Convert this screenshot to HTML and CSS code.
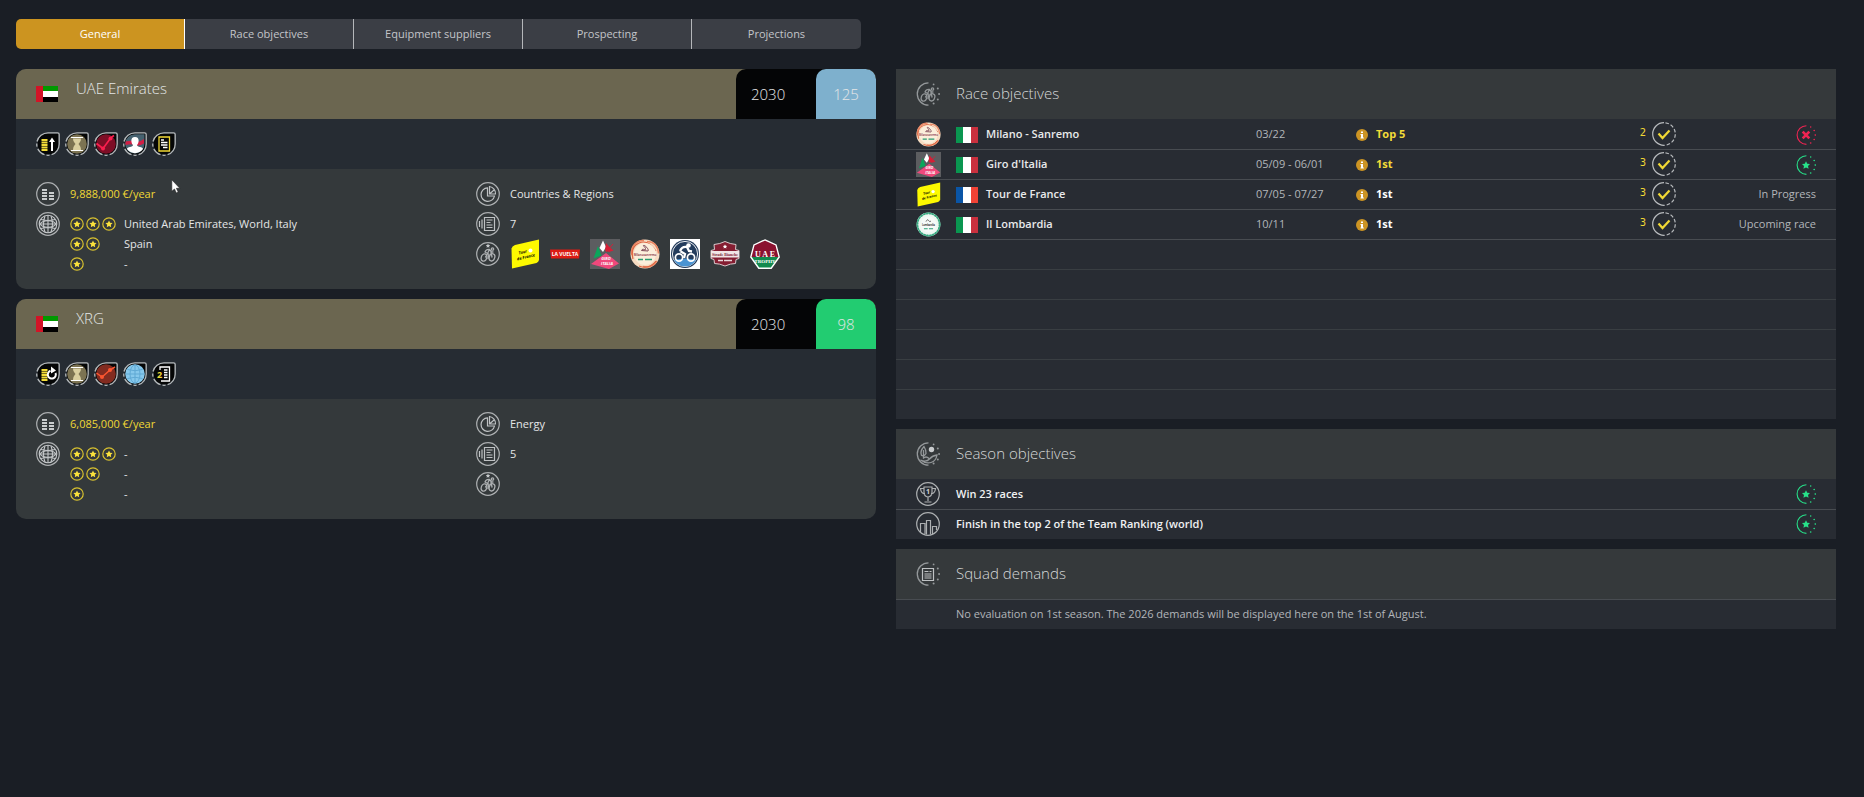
FILE: index.html
```
<!DOCTYPE html>
<html lang="en">
<head>
  <meta charset="UTF-8">
  <meta name="viewport" content="width=device-width, initial-scale=1.0">
  <title>Sponsors</title>
  <link rel="stylesheet" href="styles.css">
</head>
<body>

  <!-- shared icons -->
  <svg class="sprite" aria-hidden="true">
    <symbol id="flag-uae" viewBox="0 0 22 16">
      <path fill="#fff" d="M0 0h22v16H0z"/>
      <path fill="#090" d="M0 0h22v5H0z"/>
      <path fill="#000" d="M0 11h22v5H0z"/>
      <path fill="#d21427" d="M0 0h7v16H0z"/>
    </symbol>
    <symbol id="flag-it" viewBox="0 0 22 16">
      <path fill="#fff" d="M0 0h22v16H0z"/>
      <path fill="#0a9650" d="M0 0h7v16H0z"/>
      <path fill="#c9303e" d="M15 0h7v16h-7z"/>
    </symbol>
    <symbol id="flag-fr" viewBox="0 0 22 16">
      <path fill="#fff" d="M0 0h22v16H0z"/>
      <path fill="#0a55a6" d="M0 0h7v16H0z"/>
      <path fill="#f14336" d="M15 0h7v16h-7z"/>
    </symbol>

    <symbol id="star" viewBox="0 0 14 14">
      <circle cx="7" cy="7" r="6.2" fill="none" stroke="#d8c12f" stroke-width="1.2"/>
      <path fill="#fbe23c" d="M7 3.400l1.100 2.300 2.500.3-1.800 1.800.4 2.500-2.200-1.200-2.200 1.200.4-2.500-1.800-1.800 2.500-.3z"/>
    </symbol>

    <!-- rings -->
    <symbol id="ring" viewBox="0 0 24 24">
      <circle cx="12" cy="12" r="11.3" fill="none" stroke="#adb0b2" stroke-width="1.2"/>
    </symbol>
    <symbol id="ring-dots" viewBox="0 0 24 24">
      <path fill="none" stroke="currentColor" stroke-width="1.3" d="M12.5.8A11.2 11.2 0 0 0 12.5 23.2"/>
      <g fill="currentColor"><circle cx="17.6" cy="2.4" r=".9"/><circle cx="21.8" cy="6.6" r="1"/><circle cx="23.1" cy="12" r="1"/><circle cx="21.8" cy="17.4" r="1"/><circle cx="17.6" cy="21.6" r="1"/></g>
    </symbol>
    <symbol id="trait-frame" viewBox="0 0 24 24">
      <path fill="#050606" d="M12 1.5h9.5q1 0 1 1V12A10.5 10.5 0 1 1 12 1.5z"/>
      <g fill="none" stroke="#b4b8ba" stroke-width="1.3">
        <path d="M1 9.5A11.3 11.3 0 0 1 12 .8h9.6q1.6 0 1.6 1.6V12A11.3 11.3 0 0 1 15.6 22.7"/>
        <path d="M13.6 23.2A11.3 11.3 0 0 1 10.5 23.2M8.5 22.7A11.3 11.3 0 0 1 1.8 16.9M1 14.7A11.3 11.3 0 0 1 .8 11.5"/>
      </g>
    </symbol>

    <!-- trait icons -->
    <symbol id="coins" viewBox="0 0 24 24">
      <path stroke="#f3dc38" stroke-width="2.1" d="M5.500 8h6M5.500 10.500h6M5.500 13h6M5.500 15.500h6M5.500 18h6"/>
    </symbol>
    <symbol id="hourglass" viewBox="0 0 24 24">
      <circle cx="12" cy="12" r="9.8" fill="#7c7352"/>
      <path fill="#d9cfa0" d="M8 6.500h8c0 3-1.500 4-2.500 5.500 1 1.500 2.500 2.500 2.500 6H8c0-3.500 1.500-4.500 2.500-6C9.500 10.500 8 9.500 8 6.500z"/>
      <path stroke="#fff" stroke-width="1.2" d="M6 5.500h12M6 18.500h12"/>
    </symbol>

    <!-- info icons -->
    <symbol id="ico-budget" viewBox="0 0 24 24">
      <use href="#ring"/>
      <path stroke="#c9cccd" stroke-width="2" d="M6 8h5M6 11h5M6 14h5M6 17h5M13 11h5M13 14h5M13 17h5"/>
    </symbol>
    <symbol id="ico-globe" viewBox="0 0 24 24">
      <use href="#ring"/>
      <g fill="none" stroke="#c4c7c9" stroke-width="1.1">
        <circle cx="12" cy="12" r="8.8"/>
        <ellipse cx="12" cy="12" rx="7.500" ry="3.200"/>
        <path d="M12 3v18M3 12h18M5 7.500q7 2 14 0M5 16.500q7-2 14 0M9 4q-3 8 0 16M15 4q3 8 0 16"/>
      </g>
    </symbol>
    <symbol id="ico-sector" viewBox="0 0 24 24">
      <use href="#ring"/>
      <g fill="none" stroke="#bec1c3" stroke-width="1.2">
        <path d="M11.500 5.800a6.800 6.800 0 1 0 7 8.200h-7z"/>
        <path d="M13.500 4.500v7.500h6a7 7 0 0 0-6-7.500zM13.500 12l4.500-4"/>
      </g>
    </symbol>
    <symbol id="ico-contract" viewBox="0 0 24 24">
      <use href="#ring"/>
      <path fill="none" stroke="#bec1c3" stroke-width="1.2" d="M8.500 5.500h10v13h-10zM10.500 8h6M10.500 10.500h4M10.500 13h6M10.500 15.500h6M6 7.500v9M3.500 9v6"/>
    </symbol>
    <symbol id="cyclist" viewBox="0 0 24 24">
      <g fill="none" stroke="currentColor" stroke-width="1.3" stroke-linecap="round" stroke-linejoin="round">
        <ellipse cx="8" cy="15.500" rx="2.700" ry="3.700" transform="rotate(18 8 15.500)"/>
        <ellipse cx="16" cy="15.300" rx="2.700" ry="3.700" transform="rotate(18 16 15.300)"/>
        <path d="M9 10q1-2.800 4.500-2.500l2 2.500h1.500M9 10l4 2.200-1 4.500M13.500 7.500l-1.500 3M16 15l-1-4.500M9.500 15l2-3"/>
        <circle cx="16.500" cy="7" r="1.200"/>
      </g>
    </symbol>
    <symbol id="ico-races" viewBox="0 0 24 24">
      <use href="#ring"/>
      <use href="#cyclist"/>
      <path fill="#c8cbcd" d="M12 1.500l.7 1.400 1.500.2-1.100 1.100.3 1.600-1.400-.8-1.400.8.3-1.600-1.100-1.100 1.500-.2z"/>
    </symbol>
    <symbol id="ico-check" viewBox="0 0 24 24">
      <path fill="none" stroke="#b8bbbe" stroke-width="1.2" d="M12 .7A11.3 11.3 0 0 0 12 23.3"/>
      <path fill="none" stroke="#b8bbbe" stroke-width="1.2" stroke-dasharray="3.500 2" stroke-dashoffset="-1.500" d="M12 .7A11.3 11.3 0 0 1 12 23.3"/>
      <path fill="none" stroke="#f0d835" stroke-width="2.2" d="M6.500 11.500l4 4.500 7-7.500"/>
    </symbol>
    <symbol id="ico-info" viewBox="0 0 12 12">
      <circle cx="6" cy="6" r="6" fill="#cc9423"/>
      <path fill="#fff" d="M5 2.500h2v1.500H5zM4.500 5H7v3.500h.8v1H4.500v-1H5V6h-.5z"/>
    </symbol>
    <symbol id="ico-star-ok" viewBox="0 0 24 24">
      <use href="#ring-dots"/>
      <path fill="currentColor" d="M12 7.500l1.500 3 3.300.4-2.400 2.300.7 3.400-3.100-1.700-3.100 1.700.7-3.400-2.400-2.300 3.300-.4z"/>
    </symbol>

    <!-- race logos -->
    <symbol id="logo-tour" viewBox="0 0 30 30">
      <path fill="#fdf900" d="M1.500 9.500Q2 7 5 6L29 .5V21q-.5 2-2.500 3L2 29.500z"/>
      <g class="script" transform="rotate(-14 15 15)"><text x="9" y="14">Tour</text><text x="6" y="19.500">de France</text></g>
      <circle cx="20.500" cy="11.500" r="2" fill="#fff"/>
    </symbol>
    <symbol id="logo-vuelta" viewBox="0 0 30 30">
      <path fill="#dc1c14" d="M0 10.500h30l-1 9H1z"/>
      <text class="block" x="15" y="17" text-anchor="middle">LA VUELTA</text>
    </symbol>
    <symbol id="logo-giro" viewBox="0 0 30 30">
      <path fill="#5c5d60" d="M0 0h30v30H0z"/>
      <path fill="#f0487c" d="M1 25l15-11 13 10.500L19 30z"/>
      <path fill="#0aa65b" d="M8 7L3.500 19.500l8-3z"/>
      <path fill="#fff" d="M13 1.500L9.500 9l3.500 4 3-5z"/>
      <path fill="#d51f36" d="M16 4l4 4.500 3.500 3L19 13l-4-1.500z"/>
      <path stroke="#d51f36" d="M16 13l7-8"/>
      <text class="tiny" x="16" y="20.500" text-anchor="middle">GIRO</text>
      <text class="tiny" x="17" y="26" text-anchor="middle">ITALIA</text>
    </symbol>
    <symbol id="logo-milano" viewBox="0 0 30 30">
      <circle cx="15" cy="15" r="14.5" fill="#f6dcc2"/>
      <path fill="none" stroke="#e98663" stroke-width="1.5" d="M2 16C0 7 7 1 14 1.500M17 2.500c8 0 11 6 11.500 12M27 22c-3 5-9 7-14 5.500"/>
      <path fill="none" stroke="#df6744" stroke-width="1.2" d="M3 20Q0 8 9 4t17 8M9 27q10 4 17-5"/>
      <circle cx="15" cy="15" r="11" fill="#fbeedb"/>
      <path fill="none" stroke="#7c4455" d="M11.500 11.500c1-3 5 1 4-2s-3-2-2-3 6 4 4.500 5.500z"/>
      <text class="micro plum" x="15" y="17" text-anchor="middle">Milanosanremo</text>
      <path stroke="#299b70" stroke-width="1.3" d="M8 20.500h5M15 20.500h7"/>
    </symbol>
    <symbol id="logo-rider" viewBox="0 0 30 30">
      <path fill="#fff" d="M0 0h30v30H0z"/>
      <circle cx="15" cy="15" r="14" fill="#243c5c"/>
      <circle cx="15" cy="15" r="12.6" fill="none" stroke="#fff" stroke-width=".9"/>
      <path fill="#4a94d3" d="M4 21q11-3 22 0-4 6.500-11 6.500T4 21z"/>
      <g fill="none" stroke="#fff" stroke-width="1.7">
        <circle cx="9" cy="18.500" r="3.600"/>
        <circle cx="21" cy="18.500" r="3.600"/>
        <path stroke-width="2.3" d="M10 12q2-5 7-4l2 4 3 .5M10 12l5 3-1 4"/>
      </g>
      <circle cx="18.500" cy="6.500" r="2.300" fill="#fff"/>
    </symbol>
    <symbol id="logo-strade" viewBox="0 0 30 30">
      <path fill="#851e32" stroke="#d9c9cc" d="M15 2.500q5 2.500 11 3l-.5 5 3.500 1v8l-3 1-.5 4q-5 0-10.500 2.500Q9.500 24.500 4.500 24.500L4 20.500l-3-1v-8l3.500-1-.5-5q6-.5 11-3z"/>
      <path fill="#f1e6e6" d="M1 12h28v6.500H1z"/>
      <text class="name plum" x="15" y="17" text-anchor="middle">Strade Bianche</text>
      <path fill="#fff" d="M15 5.500l.7 1.300 1.500.2-1.100 1 .3 1.500-1.400-.7-1.400.7.3-1.500-1.100-1 1.500-.2z"/>
      <path stroke="#e8d8da" stroke-width="1.3" d="M8 21.500h5M14 21.500h8"/>
    </symbol>
    <symbol id="logo-uae" viewBox="0 0 30 30">
      <path fill="#8b1230" d="M15 1l11 5 3 12H1L4 6z"/>
      <path fill="#138a4e" d="M1 18h28l-8 11H9z"/>
      <path fill="none" stroke="#fff" stroke-width="1.4" d="M15 .9l11 5L29.200 18l-8 11.200H8.800L.8 18 4 5.900z"/>
      <text class="arch" x="15" y="17.500" text-anchor="middle">U A E</text>
      <text class="trophy" x="15" y="23.500" text-anchor="middle">TROPHY</text>
    </symbol>
    <symbol id="logo-lombardia" viewBox="0 0 30 30">
      <circle cx="15" cy="15" r="14.3" fill="#eef7f2"/>
      <circle cx="15" cy="15" r="13.3" fill="none" stroke="#2ba178" stroke-width="2" stroke-dasharray="2 1.500"/>
      <g fill="none" stroke="#3aa982" stroke-width="1">
        <path d="M15 1l10 4 4 10-4 10-10 4-10-4-4-10L5 5z"/>
        <path d="M9.600 2L20.400 2 28 9.600v10.800L20.400 28H9.600L2 20.400V9.600z"/>
      </g>
      <circle cx="15" cy="15" r="9.5" fill="#f6faf8"/>
      <path fill="none" stroke="#555" d="M12 11.500q2-4 3-1.500t3 1"/>
      <text class="micro" x="15" y="17" text-anchor="middle">Lombardia</text>
      <path stroke="#2ba178" stroke-width="1.3" d="M9.500 20h4.500M15.500 20h5"/>
    </symbol>
  </svg>

  <main class="page">

    <nav class="tabs">
      <button class="tab active" type="button">General</button>
      <button class="tab" type="button">Race objectives</button>
      <button class="tab" type="button">Equipment suppliers</button>
      <button class="tab" type="button">Prospecting</button>
      <button class="tab" type="button">Projections</button>
    </nav>

    <div class="sponsors">

      <!-- UAE Emirates -->
      <section class="sponsor">
        <header class="sponsor-head">
          <svg class="flag"><use href="#flag-uae"/></svg>
          <h2>UAE Emirates</h2>
          <div class="deal">
            <span class="year">2030</span>
            <span class="score blue">125</span>
          </div>
        </header>
        <div class="traits">
          <svg class="icon" viewBox="0 0 24 24"><use href="#trait-frame"/><use href="#coins"/><path fill="#fff" d="M16 5.500l3 4.500h-2v9h-2v-9h-2z"/></svg>
          <svg class="icon" viewBox="0 0 24 24"><use href="#trait-frame"/><use href="#hourglass"/></svg>
          <svg class="icon" viewBox="0 0 24 24"><use href="#trait-frame"/><circle cx="12" cy="12" r="9.8" fill="#7d0e26"/><path fill="none" stroke="#f91f4e" stroke-width="1.7" d="M2.500 11.500l6.500 5 8-11 3-2"/><g fill="#f91f4e"><circle cx="9" cy="16.500" r="2"/><circle cx="16.500" cy="6.500" r="2"/></g></svg>
          <svg class="icon" viewBox="0 0 24 24"><use href="#trait-frame"/><path fill="#466270" d="M12 2.200h9.500V12A9.700 9.700 0 1 1 12 2.200z"/><path fill="#d21f45" d="M2.500 9.500q7-1.500 10 0t8.500-2.500v4.500q-5 3-9 1.500t-9.500 0z"/><path fill="#fff" d="M12 5c5 0 4 6 2 8 0 2.500 6 1.500 6 4a9.800 9.800 0 0 1-16 0c0-2.500 6-1.500 6-4-2-2-3-8 2-8z"/></svg>
          <svg class="icon" viewBox="0 0 24 24"><use href="#trait-frame"/><path fill="none" stroke="#f0d835" stroke-width="1.3" d="M7 5h10.500v14H7z"/><path stroke="#fff" stroke-width="1.3" d="M9 8h3M9 10.500h6.500M9 13h6.500M11 15.500h4.500"/></svg>
        </div>
        <div class="sponsor-body">
          <div class="col">
            <div class="line money"><svg class="icon"><use href="#ico-budget"/></svg>9,888,000 €/year</div>
            <div class="line tall">
              <svg class="icon"><use href="#ico-globe"/></svg>
              <dl class="stars">
                <dt><svg><use href="#star"/></svg><svg><use href="#star"/></svg><svg><use href="#star"/></svg></dt><dd>United Arab Emirates, World, Italy</dd>
                <dt><svg><use href="#star"/></svg><svg><use href="#star"/></svg></dt><dd>Spain</dd>
                <dt><svg><use href="#star"/></svg></dt><dd>-</dd>
              </dl>
            </div>
          </div>
          <div class="col">
            <div class="line"><svg class="icon"><use href="#ico-sector"/></svg>Countries &amp; Regions</div>
            <div class="line"><svg class="icon"><use href="#ico-contract"/></svg>7</div>
            <div class="line">
              <svg class="icon grey"><use href="#ico-races"/></svg>
              <div class="logos">
                <svg><use href="#logo-tour"/></svg>
                <svg><use href="#logo-vuelta"/></svg>
                <svg><use href="#logo-giro"/></svg>
                <svg><use href="#logo-milano"/></svg>
                <svg><use href="#logo-rider"/></svg>
                <svg><use href="#logo-strade"/></svg>
                <svg><use href="#logo-uae"/></svg>
              </div>
            </div>
          </div>
        </div>
      </section>

      <!-- XRG -->
      <section class="sponsor">
        <header class="sponsor-head">
          <svg class="flag"><use href="#flag-uae"/></svg>
          <h2>XRG</h2>
          <div class="deal">
            <span class="year">2030</span>
            <span class="score green">98</span>
          </div>
        </header>
        <div class="traits">
          <svg class="icon" viewBox="0 0 24 24"><use href="#trait-frame"/><use href="#coins"/><path fill="none" stroke="#fff" stroke-width="2" d="M19.500 11a4 4 0 1 1-5-2.200"/><path fill="#fff" d="M15 4.500l5 4-5 3z"/></svg>
          <svg class="icon" viewBox="0 0 24 24"><use href="#trait-frame"/><use href="#hourglass"/></svg>
          <svg class="icon" viewBox="0 0 24 24"><use href="#trait-frame"/><circle cx="12" cy="12" r="9.8" fill="#822b20"/><path fill="none" stroke="#fb5530" stroke-width="1.5" d="M2.500 11l5.500 4 8-7 5-3"/><g fill="#fb5530"><circle cx="8" cy="15" r="2"/><circle cx="16" cy="8" r="2"/></g></svg>
          <svg class="icon" viewBox="0 0 24 24"><use href="#trait-frame"/><circle cx="12" cy="12" r="9.8" fill="#86c8ec"/><g fill="none" stroke="#5ba6d2" stroke-width=".9"><ellipse cx="12" cy="12" rx="5" ry="9"/><path d="M12 3v18M3 12h18M4.500 7.500q7.500 2.500 15 0M4.500 16.500q7.500-2.500 15 0"/></g></svg>
          <svg class="icon" viewBox="0 0 24 24"><use href="#trait-frame"/><path fill="none" stroke="#fff" stroke-width="1.3" d="M8 8V5h9.500v14H9M12 8h3.500M12 10.500h3.500M12 13h3.500M12 15.500h3.500"/><text class="two" x="5" y="16">2</text></svg>
        </div>
        <div class="sponsor-body">
          <div class="col">
            <div class="line money"><svg class="icon"><use href="#ico-budget"/></svg>6,085,000 €/year</div>
            <div class="line tall">
              <svg class="icon"><use href="#ico-globe"/></svg>
              <dl class="stars">
                <dt><svg><use href="#star"/></svg><svg><use href="#star"/></svg><svg><use href="#star"/></svg></dt><dd>-</dd>
                <dt><svg><use href="#star"/></svg><svg><use href="#star"/></svg></dt><dd>-</dd>
                <dt><svg><use href="#star"/></svg></dt><dd>-</dd>
              </dl>
            </div>
          </div>
          <div class="col">
            <div class="line"><svg class="icon"><use href="#ico-sector"/></svg>Energy</div>
            <div class="line"><svg class="icon"><use href="#ico-contract"/></svg>5</div>
            <div class="line"><svg class="icon grey"><use href="#ico-races"/></svg></div>
          </div>
        </div>
      </section>
    </div>

    <div class="objectives">

      <section class="panel">
        <header class="panel-head">
          <svg class="icon dim" viewBox="0 0 24 24"><use href="#ring-dots"/><use href="#cyclist"/></svg>
          <h2>Race objectives</h2>
        </header>
        <table class="races">
          <colgroup>
            <col class="c-logo"><col><col class="c-date"><col class="c-goal"><col class="c-points"><col class="c-status">
          </colgroup>
          <tbody>
            <tr>
              <td class="logo"><svg><use href="#logo-milano"/></svg></td>
              <td class="race"><svg class="flag"><use href="#flag-it"/></svg>Milano - Sanremo</td>
              <td>03/22</td>
              <td class="goal reached"><svg><use href="#ico-info"/></svg>Top 5</td>
              <td class="points"><span>2</span><svg class="icon"><use href="#ico-check"/></svg></td>
              <td class="status"><svg class="result fail" viewBox="0 0 24 24"><use href="#ring-dots"/><path fill="none" stroke="currentColor" stroke-width="3.2" d="M8 8l8 8M16 8l-8 8"/></svg></td>
            </tr>
            <tr>
              <td class="logo"><svg><use href="#logo-giro"/></svg></td>
              <td class="race"><svg class="flag"><use href="#flag-it"/></svg>Giro d'Italia</td>
              <td>05/09 - 06/01</td>
              <td class="goal reached"><svg><use href="#ico-info"/></svg>1st</td>
              <td class="points"><span>3</span><svg class="icon"><use href="#ico-check"/></svg></td>
              <td class="status"><svg class="result ok"><use href="#ico-star-ok"/></svg></td>
            </tr>
            <tr>
              <td class="logo"><svg><use href="#logo-tour"/></svg></td>
              <td class="race"><svg class="flag"><use href="#flag-fr"/></svg>Tour de France</td>
              <td>07/05 - 07/27</td>
              <td class="goal"><svg><use href="#ico-info"/></svg>1st</td>
              <td class="points"><span>3</span><svg class="icon"><use href="#ico-check"/></svg></td>
              <td class="status">In Progress</td>
            </tr>
            <tr>
              <td class="logo"><svg><use href="#logo-lombardia"/></svg></td>
              <td class="race"><svg class="flag"><use href="#flag-it"/></svg>Il Lombardia</td>
              <td>10/11</td>
              <td class="goal"><svg><use href="#ico-info"/></svg>1st</td>
              <td class="points"><span>3</span><svg class="icon"><use href="#ico-check"/></svg></td>
              <td class="status">Upcoming race</td>
            </tr>
            <tr class="empty"><td colspan="6"></td></tr>
            <tr class="empty"><td colspan="6"></td></tr>
            <tr class="empty"><td colspan="6"></td></tr>
            <tr class="empty"><td colspan="6"></td></tr>
            <tr class="empty"><td colspan="6"></td></tr>
            <tr class="empty"><td colspan="6"></td></tr>
          </tbody>
        </table>
      </section>

      <section class="panel">
        <header class="panel-head">
          <svg class="icon dim" viewBox="0 0 24 24"><use href="#ring-dots"/><circle cx="15.500" cy="7.500" r="2.700" fill="#c8cbcd"/><path fill="none" stroke="currentColor" stroke-width="1.3" d="M8 4.500q-4.500 5-2.500 9 3 1 4.500-2 0-4-2-7zM7.500 8v8M4.500 18q6 2.500 9-1t7.500-4q-1 6-6 7.500t-10.500-2.500M7 16.500q3-3 6 0"/></svg>
          <h2>Season objectives</h2>
        </header>
        <ul class="season">
          <li>
            <svg class="icon grey" viewBox="0 0 24 24"><use href="#ring"/><path fill="none" stroke="currentColor" stroke-width="1.2" d="M8 5h8v5q0 4.500-4 5-4-.5-4-5zM8 6.500H4.500q.5 5 4.500 5.500M16 6.500h3.500q-.5 5-4.500 5.500M12 15v4M8.500 20h7"/><text class="one" x="12" y="12" text-anchor="middle">1</text></svg>
            <span>Win 23 races</span>
            <svg class="result ok"><use href="#ico-star-ok"/></svg>
          </li>
          <li>
            <svg class="icon grey" viewBox="0 0 24 24"><use href="#ring"/><path fill="none" stroke="currentColor" stroke-width="1.2" d="M4.500 20V11.500H9V22M10.500 22.500V8.500h4V22.500M16.500 22v-7.500h4V18"/></svg>
            <span>Finish in the top 2 of the Team Ranking (world)</span>
            <svg class="result ok"><use href="#ico-star-ok"/></svg>
          </li>
        </ul>
      </section>

      <section class="panel">
        <header class="panel-head">
          <svg class="icon dim" viewBox="0 0 24 24"><use href="#ring-dots"/><path fill="none" stroke="#bfc2c4" stroke-width="1.2" d="M6.500 6.500h11v12h-11zM8.500 9.500h4M8.500 12h7M8.500 14h7M8.500 16h7M13.500 9.500h2"/></svg>
          <h2>Squad demands</h2>
        </header>
        <p class="note">No evaluation on 1st season. The 2026 demands will be displayed here on the 1st of August.</p>
      </section>
    </div>
  </main>

  <svg class="cursor" viewBox="0 0 10 16" aria-hidden="true"><path fill="#fff" stroke="#222" stroke-width=".6" d="M.8.8v11.500l2.700-2.300 1.800 4 1.900-.9-1.800-3.800h3.400z"/></svg>

</body>
</html>
```
FILE: styles.css
```
* {
  box-sizing: border-box;
}
body {
  margin: 0;
  min-height: 100vh;
  background-color: #1a1e25;
  color: #e4e6e7;
  font-family: "Open Sans", "Noto Sans", sans-serif;
  font-size: 11px;
  line-height: 20px;
}
h2, dl, dd, ul, p {
  margin: 0;
  padding: 0;
}
h2 {
  font-size: 15px;
  font-weight: 300;
}
svg {
  display: block;
  flex-shrink: 0;
}
.sprite {
  display: none;
}
.page {
  display: grid;
  grid-template-columns: 43fr 47fr;
  column-gap: 20px;
  row-gap: 20px;
  padding: 19px 28px 19px 16px;
}
.icon {
  width: 24px;
  height: 24px;
}
.flag {
  width: 22px;
  height: 16px;
}
.grey {
  color: #adb0b2;
}
.dim {
  color: #94989a;
}

/* tabs */
.tabs {
  grid-column: 1;
  display: flex;
  margin-right: 15px;
  border-radius: 5px;
  overflow: hidden;
}
.tab {
  flex: 0 0 20%;
  height: 30px;
  padding: 0;
  border: none;
  border-right: 1px solid #b5b7ba;
  background-color: #3b3e45;
  color: #c3c5c9;
  font: inherit;
  cursor: pointer;
}
.tab:last-child {
  border-right: none;
}
.tab.active {
  background-color: #cc9420;
  border-right-color: #fff;
  color: #fff;
}

/* sponsors */
.sponsors, .objectives {
  grid-row: 2;
  display: flex;
  flex-direction: column;
  gap: 10px;
}
.sponsor {
  border-radius: 10px;
  overflow: hidden;
  background-color: #34393b;
}
.sponsor-head {
  display: flex;
  align-items: center;
  height: 50px;
  padding-left: 20px;
  background-color: #6b6650;
}
.sponsor-head h2 {
  flex: 1;
  padding: 0 0 12px 18px;
}
.deal {
  display: flex;
  align-self: stretch;
  border-radius: 10px 10px 0 0;
  background-color: #040506;
  font-size: 15px;
  font-weight: 300;
  line-height: 50px;
}
.year {
  width: 80px;
  padding-left: 15px;
}
.score {
  width: 60px;
  border-radius: 10px 10px 0 0;
  text-align: center;
}
.blue {
  background-color: #7eb0cd;
}
.green {
  background-color: #22cc71;
}
.traits {
  display: flex;
  align-items: center;
  gap: 5px;
  height: 50px;
  padding: 0 20px;
  background-color: #262c33;
}
.sponsor-body {
  display: grid;
  grid-template-columns: 1fr 1fr;
  column-gap: 60px;
  padding: 10px 20px 15px;
}
.line {
  display: flex;
  align-items: center;
  gap: 10px;
  height: 30px;
}
.line.tall {
  height: auto;
  align-items: flex-start;
  padding-top: 3px;
}
.money {
  color: #f0d835;
}
.stars {
  display: grid;
  grid-template-columns: 54px 1fr;
  grid-auto-rows: 20px;
  padding-top: 2px;
}
.stars dt {
  display: flex;
  align-items: center;
  gap: 2px;
}
.stars svg {
  width: 14px;
  height: 14px;
}
.logos {
  display: flex;
  gap: 10px;
}
.logos svg {
  width: 30px;
  height: 30px;
}

/* objectives */
.panel {
  background-color: #282c33;
}
.panel-head {
  display: flex;
  align-items: center;
  gap: 16px;
  height: 50px;
  padding: 0 20px;
  background-color: #35393b;
}
.panel-head h2 {
  padding-bottom: 2px;
  color: #d6d8d9;
}
.races {
  width: 100%;
  table-layout: fixed;
  border-collapse: collapse;
}
.c-logo {
  width: 60px;
}
.c-date {
  width: 100px;
}
.c-goal, .c-points, .c-status {
  width: 160px;
}
.races td {
  height: 30px;
  padding: 0;
  color: #b3b6ba;
}
.races tr + tr, .season li + li {
  box-shadow: inset 0 1px #484c51;
}
.races .empty + .empty {
  box-shadow: inset 0 1px #393e42;
}
.races svg {
  display: inline-block;
  vertical-align: middle;
}
.races .logo {
  padding-left: 20px;
  line-height: 0;
}
.logo svg {
  width: 25px;
  height: 25px;
}
.races .race {
  color: #e8eaeb;
  font-weight: 600;
}
.race .flag {
  margin-right: 8px;
}
.races .goal {
  color: #fff;
  font-weight: 700;
}
.goal svg {
  width: 12px;
  height: 12px;
  margin-right: 8px;
}
.races .reached {
  color: #f3dc38;
}
.races .points {
  color: #f0d835;
  text-align: right;
}
.points span {
  margin-right: 6px;
  font-family: "DejaVu Sans", sans-serif;
  font-size: 10px;
  vertical-align: 1px;
}
.races .status {
  padding-right: 20px;
  text-align: right;
}
.result {
  width: 20px;
  height: 20px;
}
.ok {
  color: #27e089;
}
.fail {
  color: #ef2452;
}
.season {
  list-style: none;
}
.season li {
  display: flex;
  align-items: center;
  gap: 16px;
  height: 30px;
  padding: 0 20px;
  color: #f0f1f2;
  font-weight: 600;
}
.season span {
  flex: 1;
}
.note {
  padding: 5px 20px 5px 60px;
  box-shadow: inset 0 1px #484c51;
  color: #b3b6ba;
}

/* lettering inside the logos */
.script {
  font: italic 700 4px "Open Sans", sans-serif;
}
.block {
  fill: #fff;
  font: 700 5px "Open Sans", sans-serif;
}
.tiny {
  fill: #fff;
  font: italic 700 4px "Open Sans", sans-serif;
}
.micro {
  font: 600 3px "Open Sans", sans-serif;
}
.name {
  font: 700 4px "Liberation Serif", serif;
}
.plum {
  fill: #7c2438;
}
.arch {
  fill: #fff;
  font: 700 8px "Liberation Serif", serif;
}
.trophy {
  fill: #fff;
  font: 700 5px "Liberation Serif", serif;
}
.two {
  fill: #f3dc38;
  font: 700 9px "Open Sans", sans-serif;
}
.one {
  fill: #d0d3d5;
  font: 700 7px "Open Sans", sans-serif;
}

.cursor {
  position: absolute;
  top: 179px;
  left: 171px;
  width: 10px;
  height: 16px;
  pointer-events: none;
}
```
